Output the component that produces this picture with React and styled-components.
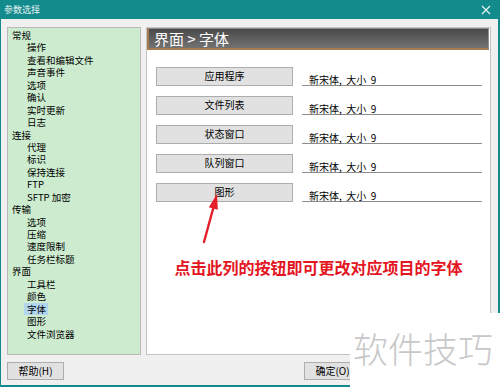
import React from "react";
import styled, { createGlobalStyle } from "styled-components";

const GlobalStyle = createGlobalStyle`
  html, body {
    margin: 0;
    padding: 0;
    width: 500px;
    height: 388px;
    overflow: hidden;
    background: #ffffff;
  }
  body {
    font-family: "Noto Sans CJK SC", "Liberation Sans", sans-serif;
    color: #000;
  }
  * { box-sizing: border-box; }
`;

const Page = styled.div`
  position: relative;
  width: 500px;
  height: 388px;
`;

const Window = styled.div`
  width: 500px;
  height: 387px;
  display: flex;
  flex-direction: column;
  background: #f0f0f0;
  border-left: 1px solid #138a8c;
  border-right: 2px solid #138a8c;
  border-bottom: 2px solid #138a8c;
`;

const TitleBar = styled.div`
  height: 19px;
  flex: none;
  display: flex;
  align-items: center;
  justify-content: space-between;
  padding: 0 7px 0 3px;
  background: #138a8c;
  color: #e6f3f3;
  font-size: 9px;
  line-height: 1;
`;

const Body = styled.div`
  flex: 1;
  display: flex;
  flex-direction: column;
  padding: 8px 7px 0 6px;
`;

const Main = styled.div`
  display: flex;
  gap: 5px;
  height: 328px;
`;

const Tree = styled.div`
  width: 134px;
  flex: none;
  background: #cdeccf;
  border: 1px solid #b9b9b9;
  padding-top: 1px;
  font-size: 9.5px;
  line-height: 12.45px;
`;

const TreeRow = styled.div`
  height: 12.45px;
  padding-left: ${(p) => (p.$level ? 16 : 1)}px;
  white-space: nowrap;
`;

const TreeLabel = styled.span`
  display: inline-block;
  padding: 0 2px 0 3px;
  background: ${(p) => (p.$selected ? "#b3d6f0" : "transparent")};
`;

const Panel = styled.div`
  position: relative;
  flex: 1;
  display: flex;
  flex-direction: column;
  background: #ffffff;
  border: 1px solid #c4c4c4;
`;

const PanelHeader = styled.div`
  height: 22px;
  margin-right: 1px;
  display: flex;
  align-items: center;
  padding-left: 5px;
  background: linear-gradient(#4a4a4a, #727272);
  border-top: 1px solid #8e8e8e;
  border-right: 1px solid #8e8e8e;
  border-left: 2px solid #a47a50;
  border-bottom: 2px solid #a47a50;
  color: #ffffff;
  font-size: 15px;
  line-height: 1;
  white-space: pre;
`;

const Rows = styled.div`
  display: flex;
  flex-direction: column;
  gap: 10px;
  padding: 17px 8px 0 9px;
`;

const Row = styled.div`
  display: flex;
  align-items: flex-start;
  height: 19px;
`;

const FontButton = styled.div`
  width: 137px;
  height: 19px;
  flex: none;
  display: flex;
  align-items: center;
  justify-content: center;
  background: #e1e1e1;
  border: 1px solid #adadad;
  font-size: 10px;
  line-height: 1;
  padding-bottom: 1px;
`;

const FontLabel = styled.div`
  flex: 1;
  height: 19px;
  margin-left: 9px;
  padding-left: 7px;
  display: flex;
  align-items: flex-end;
  border-bottom: 1px solid #8c8c8c;
  font-size: 10px;
  line-height: 10px;
  white-space: pre;
`;

const Note = styled.div`
  margin-top: 55px;
  text-align: center;
  color: #e3161f;
  font-size: 16px;
  font-weight: 700;
  line-height: 20px;
`;

const ArrowSvg = styled.svg`
  position: absolute;
  left: 50px;
  top: 160px;
`;

const Footer = styled.div`
  display: flex;
  align-items: center;
  margin-top: 7px;
  padding-right: 130px;
`;

const DialogButton = styled.div`
  width: ${(p) => p.$w}px;
  height: 18px;
  display: flex;
  align-items: center;
  justify-content: center;
  background: #e1e1e1;
  border: 1px solid #adadad;
  font-size: 10px;
  line-height: 1;
`;

const Spacer = styled.div`
  flex: 1;
`;

const Watermark = styled.div`
  position: absolute;
  left: 350px;
  top: 313px;
  width: 150px;
  height: 75px;
  display: flex;
  align-items: center;
  justify-content: center;
  padding: 0 4px 6px 0;
  background: #ffffff;
  color: #c8c8c8;
  font-size: 35px;
  font-weight: 300;
  line-height: 1;
`;

const tree = [
  ["常规", 0],
  ["操作", 1],
  ["查看和编辑文件", 1],
  ["声音事件", 1],
  ["选项", 1],
  ["确认", 1],
  ["实时更新", 1],
  ["日志", 1],
  ["连接", 0],
  ["代理", 1],
  ["标识", 1],
  ["保持连接", 1],
  ["FTP", 1],
  ["SFTP 加密", 1],
  ["传输", 0],
  ["选项", 1],
  ["压缩", 1],
  ["速度限制", 1],
  ["任务栏标题", 1],
  ["界面", 0],
  ["工具栏", 1],
  ["颜色", 1],
  ["字体", 1, true],
  ["图形", 1],
  ["文件浏览器", 1],
];

const fonts = ["应用程序", "文件列表", "状态窗口", "队列窗口", "图形"];

export default function App() {
  return (
    <Page>
      <GlobalStyle />
      <Window>
        <TitleBar>
          <span>参数选择</span>
          <svg width="10" height="10" viewBox="0 0 10 10">
            <path d="M1 1L9 9M9 1L1 9" stroke="#e6f3f3" strokeWidth="1.2" />
          </svg>
        </TitleBar>
        <Body>
          <Main>
            <Tree>
              {tree.map(([label, level, selected], i) => (
                <TreeRow key={i} $level={level}>
                  <TreeLabel $selected={selected}>{label}</TreeLabel>
                </TreeRow>
              ))}
            </Tree>
            <Panel>
              <PanelHeader>界面 &gt; 字体</PanelHeader>
              <Rows>
                {fonts.map((f) => (
                  <Row key={f}>
                    <FontButton>{f}</FontButton>
                    <FontLabel>新宋体,  大小  9</FontLabel>
                  </Row>
                ))}
              </Rows>
              <Note>点击此列的按钮即可更改对应项目的字体</Note>
              <ArrowSvg width="30" height="60" viewBox="0 0 30 60">
                <line x1="7" y1="54" x2="16.3" y2="20" stroke="#e4202a" strokeWidth="2.4" strokeLinecap="round" />
                <polygon points="20,6 20.8,21.8 11.8,19.3" fill="#e4202a" />
              </ArrowSvg>
            </Panel>
          </Main>
          <Footer>
            <DialogButton $w={57}>帮助(H)</DialogButton>
            <Spacer />
            <DialogButton $w={57}>确定(O)</DialogButton>
          </Footer>
        </Body>
      </Window>
      <Watermark>软件技巧</Watermark>
    </Page>
  );
}
